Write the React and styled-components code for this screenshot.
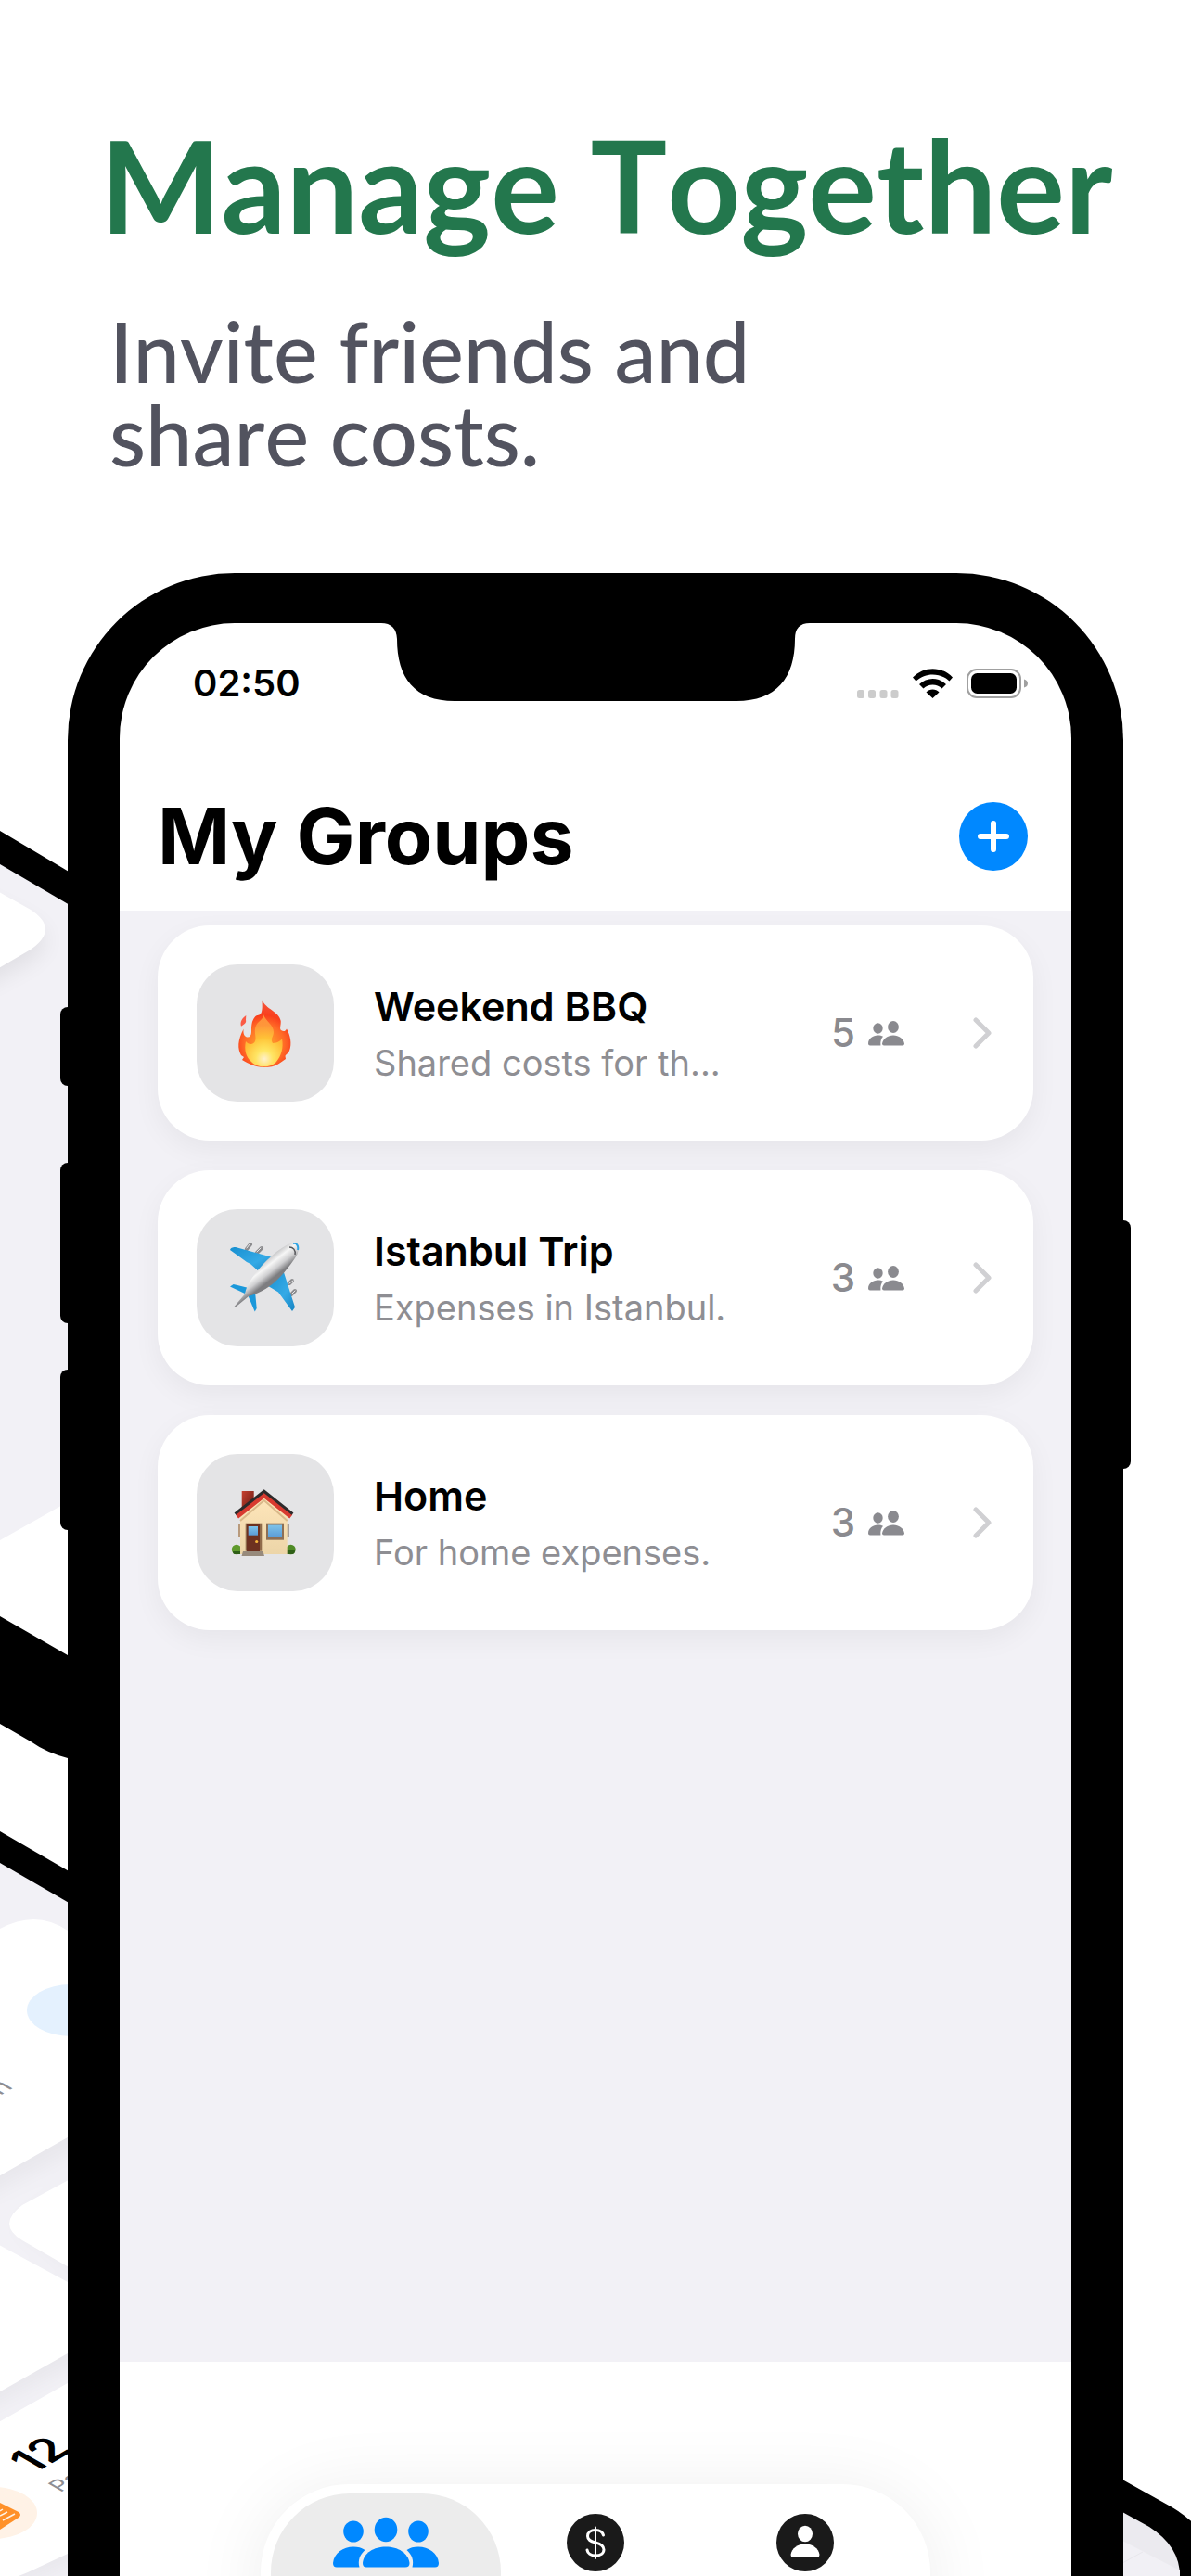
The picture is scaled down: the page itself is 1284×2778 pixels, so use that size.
import styled, { createGlobalStyle } from "styled-components";

const GlobalStyle = createGlobalStyle`
  * {
    box-sizing: border-box;
  }

  body {
    margin: 0;
    background: #ffffff;
    font-family: Inter, "Liberation Sans", sans-serif;
  }
`;

const Page = styled.main`
  display: flex;
  flex-direction: column;
  height: 100vh;
  overflow: hidden;
`;

const Hero = styled.header`
  padding: 116px 60px 105px 118px;
  font-family: Lato, sans-serif;
  font-kerning: none;

  h1 {
    margin: 0 0 51px -10px;
    color: #23774d;
    font-size: 138px;
    line-height: 166px;
    font-weight: 700;
    white-space: nowrap;
  }

  p {
    margin: 0;
    color: #52535f;
    font-size: 90px;
    line-height: 90px;
    font-weight: 500;
  }
`;

const Stage = styled.section`
  position: relative;
  flex: 1;
  min-height: 0;
  padding: 0 73px;
`;

const Backdrop = styled.svg`
  position: absolute;
  top: 0;
  ${({ $side }) => $side}: 0;
  width: 140px;
  height: 2160px;
`;

const Phone = styled.div`
  position: relative;
  padding: 54px 56px 56px;
  border-radius: 180px;
  background: #000000;
`;

const SideButton = styled.span`
  position: absolute;
  ${({ $side }) => $side}: -8px;
  top: ${({ $top }) => $top}px;
  width: 40px;
  height: ${({ $height }) => $height}px;
  border-radius: 8px;
  background: #000000;
`;

const Notch = styled.svg`
  position: absolute;
  top: 53px;
  left: 50%;
  width: 462px;
  height: 85px;
  transform: translateX(-50%);
`;

const Screen = styled.div`
  display: flex;
  flex-direction: column;
  overflow: hidden;
  border-radius: 124px;
  background: #ffffff;
`;

const StatusBar = styled.div`
  display: flex;
  align-items: center;
  height: 130px;
  padding: 0 47px 0 79px;

  time {
    flex: 1;
    font-size: 40px;
    line-height: 48px;
    font-weight: 600;
  }
`;

const StatusIcons = styled.div`
  display: flex;
  align-items: center;
  gap: 15px;
`;

const TitleBar = styled.div`
  display: flex;
  align-items: center;
  justify-content: space-between;
  height: 180px;
  padding: 20px 47px 0 41px;

  h2 {
    margin: 0;
    font-size: 84px;
    line-height: 104px;
    font-weight: 700;
  }
`;

const AddButton = styled.button`
  display: grid;
  place-items: center;
  width: 74px;
  height: 74px;
  padding: 0;
  border: 0;
  border-radius: 50%;
  background: #0088ff;
  cursor: pointer;
`;

const GroupList = styled.ul`
  display: flex;
  flex-direction: column;
  gap: 32px;
  min-height: 1565px;
  margin: 0;
  padding: 16px 41px;
  list-style: none;
  background: #f2f1f6;
`;

const GroupCard = styled.a`
  display: flex;
  align-items: center;
  height: 232px;
  padding: 0 45px 0 42px;
  border-radius: 56px;
  background: #ffffff;
  box-shadow: 0 10px 30px rgba(0, 0, 0, 0.05);
  color: #000000;
  text-decoration: none;
`;

const EmojiTile = styled.span`
  display: grid;
  place-items: center;
  flex: none;
  width: 148px;
  height: 148px;
  border-radius: 44px;
  background: #e4e4e6;
`;

const GroupText = styled.div`
  flex: 1;
  min-width: 0;
  margin-left: 43px;
  padding-top: 2px;

  h3 {
    margin: 0 0 8px;
    font-size: 43px;
    line-height: 54px;
    font-weight: 600;
  }

  p {
    margin: 0;
    color: #8e8e93;
    font-size: 38px;
    line-height: 52px;
    white-space: nowrap;
  }
`;

const Members = styled.span`
  display: flex;
  align-items: center;
  gap: 14px;
  margin-right: 74px;
  color: #8a8a8f;
  font-size: 42px;
  line-height: 52px;
  font-weight: 500;
`;

const Footer = styled.footer`
  display: flex;
  justify-content: center;
  padding: 132px 0 60px;
`;

const TabBar = styled.nav`
  display: flex;
  justify-content: center;
  width: 722px;
  height: 190px;
  padding: 10px 22px;
  border-radius: 95px;
  background: #ffffff;
  box-shadow: 0 8px 80px rgba(0, 0, 0, 0.08);
`;

const Tab = styled.button`
  display: flex;
  justify-content: center;
  flex: none;
  width: ${({ $active }) => ($active ? 248 : 226)}px;
  margin: ${({ $active }) => ($active ? "0 -11px" : "0")};
  padding: 22px 0 0;
  border: 0;
  border-radius: 85px;
  background: ${({ $active }) => ($active ? "#ececec" : "transparent")};
  cursor: pointer;
`;

const Fire = () => (
  <svg width="76" height="76" viewBox="0 0 76 76" aria-hidden="true">
    <defs>
      <radialGradient id="fireOuter" cx="37" cy="50" r="48" gradientUnits="userSpaceOnUse">
        <stop offset="0" stopColor="#ffb02e" />
        <stop offset="0.45" stopColor="#ff6a26" />
        <stop offset="0.65" stopColor="#f93f1d" />
        <stop offset="1" stopColor="#f4573f" />
      </radialGradient>
      <radialGradient id="fireInner" cx="37" cy="66" r="46" gradientUnits="userSpaceOnUse">
        <stop offset="0" stopColor="#fffde0" />
        <stop offset="0.2" stopColor="#fff06a" />
        <stop offset="0.5" stopColor="#ffc638" />
        <stop offset="0.8" stopColor="#ff9a3c" />
      </radialGradient>
    </defs>
    <path
      d="M34.7 2.5C38 12 53 15 54.7 25C55 30 53 33 55 35C58 37 60 36 61 33.5C65 40 67 50 64 57C63 60 60 61 59.5 63L60 66C54 70 50 75 37 75C27 75 20 71 13 67L15 64L12 62C8 55 8 46 14.7 33.5C14 37 14.5 41 18 42.4C21 43 23 41 23 37C23 31 23 25 27 20.5C29 18 32 20 33.7 16C35.5 11 34.2 6 34.7 2.5Z"
      fill="url(#fireOuter)"
    />
    <path
      d="M36 18C38 25 47 29 47 37C47 42 43 44 46 49C51 49 55 46 56 44C58 54 55 63 50 69C44 76 29 76 23 69C17 64 15 56 17 47C20 51 25 51 27 47C29 42 25 37 28 30C31 24 36 24 36 18Z"
      fill="url(#fireInner)"
      opacity="0.9"
    />
    <path d="M17.3 19C13 22 10.500 26 12 30.700C15 29 18 27 17 24Z" fill="#fb5a45" />
  </svg>
);

const Plane = () => (
  <svg width="76" height="76" viewBox="0 0 76 76" aria-hidden="true">
    <defs>
      <linearGradient id="fuselage" x1="30" y1="22" x2="44" y2="40" gradientUnits="userSpaceOnUse">
        <stop offset="0" stopColor="#b5b5b7" />
        <stop offset="0.4" stopColor="#f6f6f6" />
        <stop offset="0.7" stopColor="#cfcfd1" />
        <stop offset="1" stopColor="#7d7d80" />
      </linearGradient>
      <linearGradient id="wing" x1="0" y1="0" x2="1" y2="1">
        <stop offset="0" stopColor="#178fd0" />
        <stop offset="0.6" stopColor="#35aae6" />
        <stop offset="1" stopColor="#1583c2" />
      </linearGradient>
    </defs>
    <g stroke="#8b8b8e" strokeWidth="4" strokeLinecap="round">
      <path d="M22 2L18 7M34 6L29 11" />
      <path d="M67 41L64 44M70 52L66 56" />
    </g>
    <g stroke="#e8e8ea" strokeWidth="1" strokeLinecap="round">
      <path d="M21 2L18 6M33 6L29 10M68 41L64 44M70 52L67 55" />
    </g>
    <path d="M0 8C1 5 4 5 6 5L46 16L32 32L22 23L18 21Z" fill="url(#wing)" />
    <path d="M57.300 30L70 69.800L67 74L52 53.500L40 46.300Z" fill="url(#wing)" />
    <path d="M0 47.400L3.700 45L20 49L16 55Z" fill="#1b98da" />
    <path d="M19.300 57L27 53L28.700 71L26.700 74.600Z" fill="#1b98da" />
    <path
      d="M60.300 3.300C66 -0.500 72 0 73 4C75 8 73 13 68.500 19C60 31 51 42 38.700 49.800C32 54 26 56 20 58L5.500 69.800C4.500 70 4.500 69 5 68.500L16 55.500C17 50 19 45 22 41C31 26 48 10 60.300 3.300Z"
      fill="url(#fuselage)"
    />
    <path d="M64 5C68 5 71 8 70 13" stroke="#55565a" strokeWidth="1.500" fill="none" />
    <path d="M68 1C72 0 74 4 73 8" stroke="#2ea4e4" strokeWidth="2" fill="none" />
  </svg>
);

const House = () => (
  <svg width="76" height="76" viewBox="0 0 76 76" aria-hidden="true">
    <defs>
      <linearGradient id="wall" x1="0" y1="0" x2="0" y2="1">
        <stop offset="0" stopColor="#ffe6ba" />
        <stop offset="1" stopColor="#ecd5a8" />
      </linearGradient>
      <linearGradient id="glass" x1="0" y1="0" x2="0" y2="1">
        <stop offset="0" stopColor="#7ec3ea" />
        <stop offset="1" stopColor="#5a9bd5" />
      </linearGradient>
      <linearGradient id="chimney" x1="0" y1="0" x2="1" y2="1">
        <stop offset="0" stopColor="#c8402f" />
        <stop offset="1" stopColor="#5e1712" />
      </linearGradient>
    </defs>
    <circle cx="7" cy="67" r="5.200" fill="#5f9a2d" />
    <path d="M3 69H12V72H5Q3 72 3 69Z" fill="#2f5f17" />
    <circle cx="65.500" cy="67" r="5.200" fill="#4e8a25" />
    <path d="M61 68H70Q70 72 67 72H61Z" fill="#2f5f17" />
    <rect x="9" y="39" width="2" height="15" fill="#b89a7c" />
    <rect x="61.500" y="39" width="2" height="15" fill="#6f5a48" />
    <rect x="12.700" y="4" width="13" height="24" fill="url(#chimney)" />
    <path d="M11 30L36.700 9L61.700 30V72H11Z" fill="url(#wall)" />
    <path d="M11 36L36.700 14L61.700 36" stroke="#d9b98a" strokeWidth="2" fill="none" />
    <path d="M7.500 31.500L36.700 8.500L65.800 31.500" stroke="#d83a30" strokeWidth="5" fill="none" />
    <path d="M5.500 28.600L36.700 4.200L67.500 28.600" stroke="#2d2a2b" strokeWidth="3" fill="none" />
    <rect x="16.700" y="38.700" width="17.600" height="30" fill="#8f6b4a" />
    <rect x="18" y="40" width="14" height="29" fill="#6d3120" />
    <rect x="19.700" y="42" width="10.300" height="9.700" fill="url(#glass)" />
    <circle cx="28.700" cy="58.500" r="1.600" fill="#f5b63c" />
    <rect x="39" y="38.700" width="19" height="18" fill="#8d6f55" />
    <rect x="41" y="40.500" width="15" height="13.500" fill="url(#glass)" />
    <path d="M14 69H35.500L37 74H12.500Z" fill="#978a7c" />
  </svg>
);

const MembersIcon = () => (
  <svg width="39" height="27" viewBox="0 0 39 27" fill="#8a8a8f" aria-hidden="true">
    <ellipse cx="10.500" cy="8" rx="5.200" ry="5.700" />
    <ellipse cx="27" cy="6.500" rx="5.900" ry="6.500" />
    <path d="M2 26.500Q0 26.500 0 24.500C0 19 5 15.500 10.500 15.500C12.500 15.500 14.500 16 16 16.800C14 19 13 22 13.400 26.500Z" />
    <path d="M17 26.500Q15 26.500 15 24.500C16 19 21 15.500 27 15.500C33 15.500 38 19 39 24.500Q39 26.500 37 26.500Z" />
  </svg>
);

const Chevron = () => (
  <svg width="20" height="34" viewBox="0 0 20 34" fill="none" aria-hidden="true">
    <path d="M3 3L17 17L3 31" stroke="#d0d0d3" strokeWidth="5" strokeLinecap="round" strokeLinejoin="round" />
  </svg>
);

const GroupsIcon = () => (
  <svg width="114" height="62" viewBox="0 0 114 62" fill="#0088ff" aria-hidden="true">
    <ellipse cx="22" cy="19" rx="10.800" ry="11.500" />
    <ellipse cx="57" cy="17" rx="12.300" ry="13.200" />
    <ellipse cx="92" cy="19" rx="10.800" ry="11.500" />
    <path d="M4 57.500Q0 57.500 0 53C1 42 11 35.500 22 35.500C27 35.500 31 36.500 34.500 39C29 44 26.500 50 28.500 57.500Z" />
    <path d="M110 57.500Q114 57.500 114 53C113 42 103 35.500 92 35.500C87 35.500 83 36.500 79.500 39C85 44 87.500 50 85.500 57.500Z" />
    <path d="M36 57.500Q32 57.500 32 53C33 42 44 35.500 57 35.500C70 35.500 81 42 82.500 53Q82.500 57.500 78 57.500Z" />
  </svg>
);

const ExpensesIcon = () => (
  <svg width="62" height="62" viewBox="0 0 62 62" aria-hidden="true">
    <circle cx="31" cy="31" r="31" fill="#1a1a1a" />
    <g fill="none" stroke="#ffffff" strokeWidth="3" strokeLinecap="round">
      <path d="M39.500 23C38.500 19.500 35.500 17.500 31 17.500C26 17.500 22.500 20 22.500 24C22.500 28 25.500 29.500 31 31C37 32.500 40 34.500 40 38.500C40 42.500 36.500 45 31 45C26 45 22.500 42.500 22 39" />
      <path d="M31 14.500V48" strokeWidth="2" />
    </g>
  </svg>
);

const ProfileIcon = () => (
  <svg width="62" height="62" viewBox="0 0 62 62" aria-hidden="true">
    <circle cx="31" cy="31" r="31" fill="#1a1a1a" />
    <ellipse cx="31" cy="21.500" rx="8" ry="8.700" fill="#ffffff" />
    <path d="M17.500 46.500Q15.500 46.500 15.500 44C16.500 37 23 32.500 31 32.500C39 32.500 45.500 37 46.500 44Q46.500 46.500 44.500 46.500Z" fill="#ffffff" />
  </svg>
);

// corners of the tilted phones that stick out behind the front one
const LeftBackdrop = () => (
  <Backdrop $side="left" viewBox="0 618 140 2160" aria-hidden="true">
    <defs>
      <filter id="soft" x="-50%" y="-50%" width="200%" height="200%">
        <feGaussianBlur stdDeviation="12" />
      </filter>
    </defs>
    <path d="M0 914L140 996V1582L0 1661Z" fill="#f2f1f6" />
    <path d="M-40 960L33 994Q64 1012 33 1036L-40 1075Z" fill="#000000" opacity="0.07" filter="url(#soft)" />
    <path d="M-10 957L33 981Q65 1002 33 1024L-10 1049Z" fill="#ffffff" />
    <path d="M0 896L140 979V1014L0 932Z" fill="#000000" />
    <path d="M0 1743L73 1785L140 1820V1904Q100 1904 73 1896Q50 1890 33 1878L0 1859Z" fill="#000000" />

    <path d="M0 1992L140 2074V2778H0Z" fill="#f2f1f6" />
    <g fill="#000000" opacity="0.04" filter="url(#soft)">
      <path d="M-60 2090L140 2110V2290L-60 2390Z" />
      <path d="M140 2325L15 2400L140 2490Z" />
      <path d="M-60 2420L140 2500V2520L-60 2620Z" />
      <path d="M-60 2660L140 2560V2740L-60 2820Z" />
    </g>
    <path d="M-10 2086Q35 2056 73 2082L140 2120V2267L-10 2352Z" fill="#ffffff" />
    <ellipse cx="76" cy="2168" rx="47" ry="28" fill="#e4f1fe" />
    <path d="M140 2315L24 2378Q-4 2399 24 2416L140 2483Z" fill="#ffffff" />
    <path d="M-10 2416L73 2461L140 2500L-10 2585Z" fill="#ffffff" />
    <path d="M-10 2617L140 2532V2717L73 2754L30 2774L20 2778H-10Z" fill="#ffffff" />
    <path d="M0 1975L140 2056V2090L0 2009Z" fill="#000000" />
    <text transform="matrix(0.866 -0.5 0.866 0.5 0 2260)" fontSize="30" fill="#8e8e93">
      n
    </text>
    <text transform="matrix(0.866 -0.5 0.866 0.5 36 2668)" fontSize="48" fontWeight="600" fill="#000000">
      12
    </text>
    <text transform="matrix(0.866 -0.5 0.866 0.5 65 2688)" fontSize="24" fill="#8e8e93">
      Pa
    </text>
    <ellipse cx="-7" cy="2710" rx="47" ry="28" fill="#fff2e6" />
    <path d="M0 2699L20 2709Q24 2712 20 2715L0 2728Z" fill="#ff9129" />
    <path d="M0 2708L3 2706M3 2718L16 2711M0 2713L8 2709" stroke="#fff2e6" strokeWidth="1.500" />
  </Backdrop>
);

const RightBackdrop = () => (
  <Backdrop $side="right" viewBox="1144 618 140 2160" aria-hidden="true">
    <path d="M1190 2662L1210 2674L1262 2703Q1276 2711 1290 2724V2790H1190Z" fill="#000000" />
    <path d="M1190 2697L1210 2709L1239 2725Q1272 2746 1272 2778H1190Z" fill="#ebeaef" />
    <path d="M1190 2730L1210 2740L1272 2772V2778H1190Z" fill="#f1f0f5" />
    <path d="M1210 2764L1232 2752" stroke="#e8e7ec" strokeWidth="1" />
  </Backdrop>
);

const groups = [
  { id: "weekend-bbq", name: "Weekend BBQ", note: "Shared costs for th...", members: 5, Icon: Fire },
  { id: "istanbul-trip", name: "Istanbul Trip", note: "Expenses in Istanbul.", members: 3, Icon: Plane },
  { id: "home", name: "Home", note: "For home expenses.", members: 3, Icon: House },
];

const Group = ({ group }) => {
  const { id, name, note, members, Icon } = group;

  return (
    <li>
      <GroupCard href={`#${id}`}>
        <EmojiTile>
          <Icon />
        </EmojiTile>
        <GroupText>
          <h3>{name}</h3>
          <p>{note}</p>
        </GroupText>
        <Members>
          {members}
          <MembersIcon />
        </Members>
        <Chevron />
      </GroupCard>
    </li>
  );
};

const App = () => {
  return (
    <>
      <GlobalStyle />
      <Page>
        <Hero>
          <h1>Manage Together</h1>
          <p>
            Invite friends and
            <br />
            share costs.
          </p>
        </Hero>
        <Stage>
          <LeftBackdrop />
          <RightBackdrop />
          <Phone>
            <SideButton $side="left" $top={468} $height={85} />
            <SideButton $side="left" $top={636} $height={173} />
            <SideButton $side="left" $top={859} $height={173} />
            <SideButton $side="right" $top={698} $height={268} />
            <Screen>
              <StatusBar>
                <time>02:50</time>
                <StatusIcons>
                  <svg width="45" height="32" viewBox="0 0 45 32" fill="#cccccc" aria-hidden="true">
                    <rect x="0" y="23" width="8" height="9" rx="2.500" />
                    <rect x="12" y="23" width="8" height="9" rx="2.500" />
                    <rect x="24.500" y="23" width="8" height="9" rx="2.500" />
                    <rect x="36.500" y="23" width="8" height="9" rx="2.500" />
                  </svg>
                  <svg width="43" height="32" viewBox="0 0 43 32" aria-hidden="true">
                    <path d="M0 9.500C12 -3 31 -3 43 9.500L39.500 13.500C29 4 14 4 3.500 13.500Z" />
                    <path d="M7 17C15 9 28 9 36 17L31.500 21.500C26 16 17 16 11.500 21.500Z" />
                    <path d="M14.500 25.500C18 21.500 25 21.500 28.500 25.500L21.500 32Z" />
                  </svg>
                  <svg width="66" height="32" viewBox="0 0 66 32" aria-hidden="true">
                    <rect x="1" y="1" width="57" height="30" rx="10" fill="none" stroke="#a0a0a0" strokeWidth="2" />
                    <rect x="5" y="5" width="49" height="22" rx="6.500" />
                    <path d="M62 11.500Q66 12.500 66 16T62 20.500Z" fill="#a0a0a0" />
                  </svg>
                </StatusIcons>
              </StatusBar>
              <TitleBar>
                <h2>My Groups</h2>
                <AddButton aria-label="Add group">
                  <svg width="34" height="34" viewBox="0 0 34 34" aria-hidden="true">
                    <path d="M17 3V31M3 17H31" stroke="#ffffff" strokeWidth="6" strokeLinecap="round" />
                  </svg>
                </AddButton>
              </TitleBar>
              <GroupList>
                {groups.map((group) => (
                  <Group key={group.id} group={group} />
                ))}
              </GroupList>
              <Footer>
                <TabBar>
                  <Tab $active aria-label="Groups">
                    <GroupsIcon />
                  </Tab>
                  <Tab aria-label="Expenses">
                    <ExpensesIcon />
                  </Tab>
                  <Tab aria-label="Profile">
                    <ProfileIcon />
                  </Tab>
                </TabBar>
              </Footer>
            </Screen>
            <Notch viewBox="0 0 462 85" aria-hidden="true">
              <path d="M0 0H462V1Q446 1 446 18C446 60 426 85 383 85H79C36 85 17 60 17 18Q16 1 0 1Z" />
            </Notch>
          </Phone>
        </Stage>
      </Page>
    </>
  );
};

export default App;
